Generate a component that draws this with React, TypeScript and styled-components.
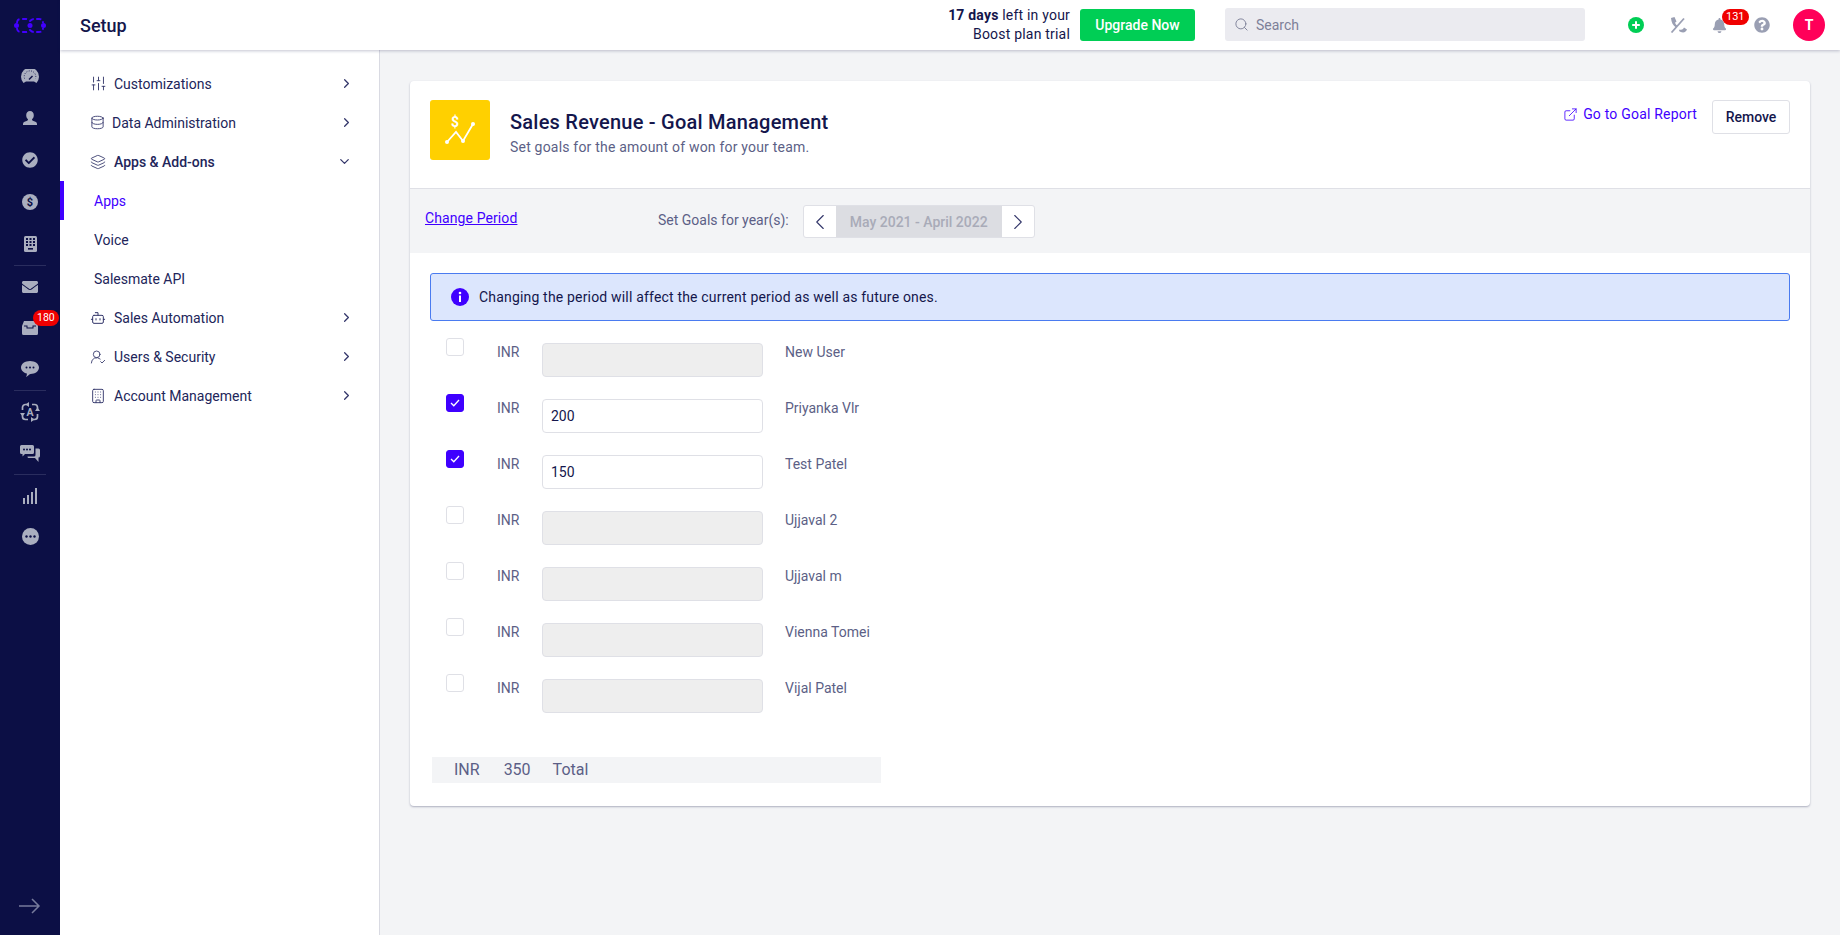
import React from "react";
import styled, { createGlobalStyle } from "styled-components";
import {
  SlidersVertical,
  Database,
  Layers,
  ChevronRight,
  ChevronDown,
  ChevronLeft,
  Bot,
  UserRoundCheck,
  Building,
  Search,
  ExternalLink,
} from "lucide-react";
import { FaCheckCircle, FaEnvelope, FaBell, FaQuestionCircle } from "react-icons/fa";

const GlobalStyle = createGlobalStyle`
  html, body { margin: 0; padding: 0; height: 100%; }
  body { font-family: Roboto, "Noto Sans", sans-serif; font-size: 14px; color: #14164c; background: #f3f4f6; }
  * { box-sizing: border-box; }
`;

const Page = styled.div`
  display: flex;
  height: 935px;
  overflow: hidden;
`;

const Rail = styled.nav`
  width: 60px;
  flex: none;
  background: #0c0f45;
  display: flex;
  flex-direction: column;
  align-items: center;
`;

const RailLogo = styled.div`
  height: 55px;
  width: 100%;
  flex: none;
  display: flex;
  align-items: center;
  justify-content: center;
  padding-bottom: 5px;
`;

const RailItem = styled.div<{ $h?: number }>`
  height: ${(p) => p.$h || 42}px;
  width: 100%;
  display: flex;
  align-items: center;
  justify-content: center;
  color: #aaaebf;
  position: relative;
  flex: none;
`;

const RailLine = styled.div`
  width: 32px;
  height: 1px;
  background: #2a2d5e;
  flex: none;
`;

const RailBadge = styled.span`
  position: absolute;
  top: 3px;
  left: 33px;
  background: #f00000;
  color: #fff;
  font-size: 10.5px;
  line-height: 16px;
  padding: 0 4px;
  border-radius: 8px;
`;

const RailArrow = styled.div`
  margin-top: auto;
  margin-bottom: 21px;
  color: #777b9c;
  display: flex;
`;

const Main = styled.div`
  flex: 1;
  display: flex;
  flex-direction: column;
  min-width: 0;
`;

const Header = styled.header`
  height: 50px;
  flex: none;
  background: #fff;
  box-shadow: 0 1px 3px rgba(20, 22, 76, 0.25);
  display: flex;
  align-items: center;
  padding-left: 20px;
  position: relative;
  z-index: 2;
`;

const PageName = styled.div`
  font-size: 18px;
  font-weight: 500;
  margin-right: auto;
`;

const Trial = styled.div`
  text-align: right;
  font-size: 14px;
  line-height: 19px;
  letter-spacing: 0.2px;
  margin-right: 10px;
  b { font-weight: 700; }
`;

const Upgrade = styled.button`
  width: 115px;
  height: 32px;
  border: none;
  border-radius: 3px;
  background: #00ce55;
  color: #fff;
  font-family: inherit;
  font-size: 14px;
  font-weight: 500;
  margin-right: 30px;
`;

const SearchBox = styled.div`
  width: 360px;
  height: 33px;
  background: #ebebf0;
  border-radius: 3px;
  display: flex;
  align-items: center;
  gap: 7px;
  padding-left: 9px;
  color: #7d8098;
  margin: 0 43px 1px 0;
`;

const HeaderIcons = styled.div`
  display: flex;
  align-items: center;
  padding-right: 15px;
`;

const HeaderIcon = styled.div<{ $w: number }>`
  width: ${(p) => p.$w}px;
  display: flex;
  color: #9a9fb3;
  position: relative;
`;

const BellBadge = styled.span`
  position: absolute;
  top: -9px;
  left: 10px;
  background: #f00000;
  color: #fff;
  font-size: 11px;
  line-height: 16px;
  padding: 0 4px;
  border-radius: 8px;
`;

const Avatar = styled.div`
  width: 32px;
  height: 32px;
  border-radius: 50%;
  background: #ff0059;
  color: #fff;
  font-weight: 700;
  font-size: 14px;
  display: flex;
  align-items: center;
  justify-content: center;
`;

const Body = styled.div`
  flex: 1;
  display: flex;
  min-height: 0;
`;

const Sidebar = styled.aside`
  width: 320px;
  flex: none;
  background: #fff;
  border-right: 1px solid #d9dae2;
  padding-top: 14px;
`;

const MenuRow = styled.div<{ $active?: boolean; $sub?: boolean; $bold?: boolean }>`
  height: 39px;
  display: flex;
  align-items: center;
  padding-left: ${(p) => (p.$sub ? 34 : 30)}px;
  padding-right: 25px;
  font-weight: ${(p) => (p.$bold ? 500 : 400)};
  color: ${(p) => (p.$active ? "#3f00ff" : "#22255a")};
  position: relative;
  ${(p) => p.$active && `&::before { content: ""; position: absolute; left: 0; top: 0; bottom: 0; width: 4px; background: #3f00ff; }`}
  svg { flex: none; color: #33366a; }
  > span { flex: 1; }
`;

const MenuIcon = styled.div<{ $w?: number }>`
  width: ${(p) => p.$w || 24}px;
  flex: none;
  display: flex;
`;

const OpenChevron = styled(ChevronDown)`
  margin-right: 2px;
`;

const Content = styled.main`
  flex: 1;
  padding: 31px 30px 0 30px;
  min-width: 0;
`;

const Card = styled.section`
  background: #fff;
  border-radius: 4px;
  box-shadow: 0 1px 2px rgba(40, 45, 90, 0.35);
`;

const CardHead = styled.div`
  height: 108px;
  display: flex;
  padding: 19px 20px 0 20px;
  border-bottom: 1px solid #dfe0e6;
`;

const GoalIcon = styled.div`
  width: 60px;
  height: 60px;
  background: #ffd000;
  border-radius: 3px;
  display: flex;
  margin-right: 20px;
  flex: none;
`;

const HeadText = styled.div`
  margin-right: auto;
  padding-top: 10px;
`;

const Title = styled.h1`
  margin: 0;
  font-size: 20px;
  line-height: 24px;
  font-weight: 500;
  letter-spacing: 0.23px;
`;

const SubTitle = styled.p`
  margin: 3px 0 0;
  font-size: 14px;
  line-height: 20px;
  letter-spacing: 0.2px;
  color: #5c5f86;
`;

const ReportLink = styled.a`
  display: flex;
  align-items: center;
  gap: 5px;
  height: 28px;
  margin: 0 15px 0 0;
  letter-spacing: 0.2px;
  color: #3f00ff;
`;

const RemoveBtn = styled.button`
  width: 78px;
  height: 34px;
  background: #fff;
  border: 1px solid #dfe0e6;
  border-radius: 3px;
  font-family: inherit;
  font-size: 14px;
  font-weight: 500;
  color: #14164c;
`;

const PeriodBar = styled.div`
  height: 64px;
  background: #f3f4f6;
  display: flex;
  align-items: flex-start;
  padding: 16px 0 0 15px;
`;

const ChangeLink = styled.a`
  color: #3f00ff;
  text-decoration: underline;
  letter-spacing: 0.1px;
  width: 233px;
  line-height: 26px;
`;

const PeriodLabel = styled.span`
  color: #5c5f86;
  line-height: 30px;
  margin-right: 14px;
`;

const Stepper = styled.div`
  display: flex;
  height: 33px;
  border: 1px solid #dfe0e6;
  border-radius: 3px;
  overflow: hidden;
  background: #fff;
`;

const StepBtn = styled.div`
  width: 32px;
  display: flex;
  align-items: center;
  justify-content: center;
  color: #33366a;
`;

const StepValue = styled.div`
  width: 166px;
  background: #dcdde2;
  color: #a9abb8;
  font-weight: 500;
  text-align: center;
  line-height: 33px;
`;

const CardBody = styled.div`
  padding: 20px 20px 23px;
`;

const Alert = styled.div`
  height: 48px;
  background: #dce6fd;
  border: 1px solid #4a7bf0;
  border-radius: 3px;
  display: flex;
  align-items: center;
  gap: 10px;
  padding-left: 20px;
  margin-bottom: 22px;
  letter-spacing: 0.18px;
`;

const GoalRow = styled.div`
  display: flex;
  height: 34px;
  margin: 0 0 22px 16px;
`;

const Check = styled.span<{ $on?: boolean }>`
  width: 18px;
  height: 18px;
  border-radius: 3px;
  margin-top: -5px;
  margin-right: 33px;
  flex: none;
  display: flex;
  align-items: center;
  justify-content: center;
  background: ${(p) => (p.$on ? "#3f00ff" : "#fff")};
  border: 1px solid ${(p) => (p.$on ? "#3f00ff" : "#dfe0e6")};
`;

const Currency = styled.span`
  width: 45px;
  flex: none;
  color: #5c5f86;
  line-height: 18px;
`;

const AmountInput = styled.div<{ $off?: boolean }>`
  width: 221px;
  height: 34px;
  flex: none;
  border: 1px solid #dfe0e6;
  border-radius: 4px;
  background: ${(p) => (p.$off ? "#eeeeee" : "#fff")};
  color: #14164c;
  padding-left: 8px;
  line-height: 32px;
  margin-right: 22px;
`;

const UserName = styled.span`
  color: #5c5f86;
  line-height: 18px;
`;

const TotalBar = styled.div`
  width: 449px;
  height: 26px;
  margin: 44px 0 0 2px;
  background: #f3f4f6;
  color: #5c5f86;
  font-size: 16px;
  line-height: 26px;
  display: flex;
  gap: 22px;
  padding-left: 22px;
  span:first-child { margin-right: 2px; }
`;

const menu = [
  { label: "Customizations", icon: <SlidersVertical size={17} strokeWidth={1.3} /> },
  { label: "Data Administration", icon: <Database size={15} strokeWidth={1.4} />, slot: 22 },
  { label: "Apps & Add-ons", icon: <Layers size={16} strokeWidth={1.3} />, open: true },
  { label: "Apps", sub: true, active: true },
  { label: "Voice", sub: true },
  { label: "Salesmate API", sub: true },
  { label: "Sales Automation", icon: <Bot size={16} strokeWidth={1.5} /> },
  { label: "Users & Security", icon: <UserRoundCheck size={16} strokeWidth={1.3} /> },
  { label: "Account Management", icon: <Building size={16} strokeWidth={1.4} /> },
];

const goals = [
  { name: "New User" },
  { name: "Priyanka Vlr", value: "200" },
  { name: "Test Patel", value: "150" },
  { name: "Ujjaval 2" },
  { name: "Ujjaval m" },
  { name: "Vienna Tomei" },
  { name: "Vijal Patel" },
];

const Logo = () => (
  <svg width="32" height="15" viewBox="0 0 32 15" fill="none" stroke="#4200ff" strokeWidth="1.8" strokeDasharray="5 2.5">
    <path d="M3 5Q3 1 7 1H12Q14 1 16 3Q18 1 20 1H25Q29 1 29 5" />
    <path d="M3 10Q3 14 7 14H12Q14 14 16 12Q18 14 20 14H25Q29 14 29 10" />
    <circle cx="2.5" cy="7.5" r="2.5" fill="#4200ff" stroke="none" />
    <circle cx="16" cy="7.5" r="2.5" fill="#4200ff" stroke="none" />
    <circle cx="29.5" cy="7.5" r="2.5" fill="#4200ff" stroke="none" />
  </svg>
);

const GaugeIcon = () => (
  <svg width="18" height="14" viewBox="0 0 18 14" fill="none">
    <path d="M2.5 14A9 9 0 1 1 15.5 14L13 12.5H5z" fill="currentColor" />
    <path d="M3.5 9.5A5.8 5.8 0 1 1 14.5 9.500" stroke="#0c0f45" strokeWidth="1" strokeDasharray="0.8 1.6" />
    <path d="M8 10.5L11.5 7" stroke="#0c0f45" strokeWidth="1.4" />
  </svg>
);

const UserIcon = () => (
  <svg width="14" height="14" viewBox="0 0 14 14">
    <path
      d="M7 0c2.400 0 3.800 1.800 3.800 4.200 0 1.800-.8 3.300-1.800 4 0 .8.400 1.300 1.500 1.700 1.800.6 3.500 1.200 3.500 3V14H0v-1.100c0-1.800 1.700-2.400 3.500-3C4.600 9.500 5 9 5 8.200c-1-.7-1.800-2.200-1.800-4C3.200 1.800 4.600 0 7 0z"
      fill="currentColor"
    />
  </svg>
);

const DollarIcon = () => (
  <svg width="16" height="16" viewBox="0 0 16 16">
    <circle cx="8" cy="8" r="8" fill="currentColor" />
    <text x="8" y="12" textAnchor="middle" fontSize="11" fontWeight="700" fill="#0c0f45" fontFamily="Roboto">$</text>
  </svg>
);

const KeypadIcon = () => (
  <svg width="13" height="16" viewBox="0 0 13 16">
    <rect width="13" height="16" rx="1.5" fill="currentColor" />
    {[2, 5.5, 9].map((x) =>
      [2, 5, 8].map((y) => <rect key={`${x}-${y}`} x={x} y={y} width="2" height="2" fill="#0c0f45" />)
    )}
    <rect x="4" y="12" width="5" height="1.6" fill="#0c0f45" />
  </svg>
);

const InboxIcon = () => (
  <svg width="16" height="14" viewBox="0 0 16 14">
    <path d="M2 0h12l2 5v7.500a1.500 1.500 0 0 1-1.500 1.500h-13A1.500 1.500 0 0 1 0 12.500V5z" fill="currentColor" />
    <path d="M2 4.500h3.500v2h5v-2H14v1H11.500v2h-7v-2H2z" fill="#0c0f45" />
  </svg>
);

const BubbleIcon = () => (
  <svg width="18" height="16" viewBox="0 0 18 16">
    <path d="M9 0c5 0 9 2.800 9 6.500S14 13 9.500 13c-1 .1-2 1.800-4.500 3 .7-1.200 1-2.400.9-3.400C2.500 11.800 0 9.500 0 6.500 0 2.800 4 0 9 0z" fill="currentColor" />
    <circle cx="5.500" cy="6.500" r="1" fill="#0c0f45" />
    <circle cx="9" cy="6.500" r="1" fill="#0c0f45" />
    <circle cx="12.500" cy="6.500" r="1" fill="#0c0f45" />
  </svg>
);

const AutomationIcon = () => (
  <svg width="20" height="20" viewBox="0 0 20 20" fill="none" stroke="currentColor" strokeWidth="1.700">
    <path d="M8 2.500H5.500a3 3 0 0 0-3 3V8M12 2.500h2.500a3 3 0 0 1 3 3V8M17.500 12v2.500a3 3 0 0 1-3 3H12M2.500 12v2.500a3 3 0 0 0 3 3H8" />
    <path d="M9 0L5.500 2.500 9 5zM15 9l2.500-3.500L20 9zM11 15l3.500 2.500L11 20zM0 11l2.500 3.500L5 11z" fill="currentColor" stroke="none" />
    <text x="10" y="14" textAnchor="middle" fontSize="10.500" fontWeight="700" fill="#aaaebf" stroke="none" fontFamily="Roboto">A</text>
  </svg>
);

const TwoChatsIcon = () => (
  <svg width="20" height="17" viewBox="0 0 20 17">
    <path d="M1.500 0h11A1.500 1.500 0 0 1 14 1.500v6A1.500 1.500 0 0 1 12.500 9H5l-2.500 2.500V9h-1A1.500 1.500 0 0 1 0 7.500v-6A1.500 1.500 0 0 1 1.500 0z" fill="currentColor" />
    <circle cx="4" cy="4.500" r="1" fill="#0c0f45" />
    <circle cx="7" cy="4.500" r="1" fill="#0c0f45" />
    <circle cx="10" cy="4.500" r="1" fill="#0c0f45" />
    <path d="M15.500 3.500h3A1.500 1.500 0 0 1 20 5v6a1.500 1.500 0 0 1-1.500 1.500V17L15 13H9c-1 0-1.500-.5-1.500-1.500h6.500a1.500 1.500 0 0 0 1.500-1.500z" fill="currentColor" />
  </svg>
);

const BarsIcon = () => (
  <svg width="14" height="16" viewBox="0 0 14 16" fill="currentColor">
    <rect x="0" y="10" width="2" height="6" />
    <rect x="4" y="7" width="2" height="9" />
    <rect x="8" y="4" width="2" height="12" />
    <rect x="12" y="0" width="2" height="16" />
  </svg>
);

const MoreIcon = () => (
  <svg width="17" height="17" viewBox="0 0 17 17">
    <circle cx="8.500" cy="8.500" r="8.500" fill="currentColor" />
    <circle cx="4.500" cy="8.500" r="1.200" fill="#0c0f45" />
    <circle cx="8.500" cy="8.500" r="1.200" fill="#0c0f45" />
    <circle cx="12.500" cy="8.500" r="1.200" fill="#0c0f45" />
  </svg>
);

const ArrowIcon = () => (
  <svg width="22" height="16" viewBox="0 0 22 16" fill="none" stroke="currentColor" strokeWidth="1.500">
    <path d="M0 8h20M13 1l7 7-7 7" />
  </svg>
);

const PlusIcon = () => (
  <svg width="16" height="16" viewBox="0 0 16 16">
    <circle cx="8" cy="8" r="8" fill="#00ce55" />
    <path d="M8 4.200v7.600M4.200 8h7.600" stroke="#fff" strokeWidth="2" />
  </svg>
);

const PhonePercentIcon = () => (
  <svg width="17" height="16" viewBox="0 0 17 16" fill="none">
    <path d="M1 1l3.500-1 2 4.500-1.500 1.200c.5 1.200 1.300 2.200 2.300 3L6 10.500C3 8.500 1.300 5.500 1 1z" fill="currentColor" />
    <path d="M9.500 12.500c1.500.5 2.500.3 3.500-.5l1-1.500 3 2c-.5 1.500-2 3-4 3-1.500 0-3-.8-4-1.500z" fill="currentColor" />
    <path d="M1.500 15.500L14 1.500" stroke="currentColor" strokeWidth="1.800" />
  </svg>
);

const GoalChart = () => (
  <svg width="60" height="60" viewBox="0 0 60 60" fill="none" stroke="#fff" strokeWidth="1.800">
    <path d="M17 42L26 32l7 9L43 24" />
    <circle cx="17" cy="42" r="2" fill="#fff" stroke="none" />
    <circle cx="33" cy="41" r="2" fill="#fff" stroke="none" />
    <circle cx="43" cy="24" r="2" fill="#fff" stroke="none" />
    <text x="25" y="27" textAnchor="middle" fontSize="14" fontWeight="700" fill="#fff" stroke="none" fontFamily="Roboto">$</text>
  </svg>
);

const InfoIcon = () => (
  <svg width="18" height="18" viewBox="0 0 18 18">
    <circle cx="9" cy="9" r="9" fill="#3f00ff" />
    <rect x="8" y="7.500" width="2" height="6.500" fill="#fff" />
    <circle cx="9" cy="5" r="1.300" fill="#fff" />
  </svg>
);

const TickIcon = () => (
  <svg width="10" height="8" viewBox="0 0 10 8" fill="none" stroke="#fff" strokeWidth="1.300">
    <path d="M1 4l2.800 2.800L9 1" />
  </svg>
);

export default function App() {
  return (
    <Page>
      <GlobalStyle />
      <Rail>
        <RailLogo><Logo /></RailLogo>
        <RailItem><GaugeIcon /></RailItem>
        <RailItem><UserIcon /></RailItem>
        <RailItem><FaCheckCircle size={16} /></RailItem>
        <RailItem><DollarIcon /></RailItem>
        <RailItem><KeypadIcon /></RailItem>
        <RailLine />
        <RailItem $h={41}><FaEnvelope size={16} /></RailItem>
        <RailItem $h={41}><InboxIcon /><RailBadge>180</RailBadge></RailItem>
        <RailItem><BubbleIcon /></RailItem>
        <RailLine />
        <RailItem><AutomationIcon /></RailItem>
        <RailItem $h={41}><TwoChatsIcon /></RailItem>
        <RailLine />
        <RailItem $h={41}><BarsIcon /></RailItem>
        <RailItem $h={41}><MoreIcon /></RailItem>
        <RailArrow><ArrowIcon /></RailArrow>
      </Rail>
      <Main>
        <Header>
          <PageName>Setup</PageName>
          <Trial><b>17 days</b> left in your<br />Boost plan trial</Trial>
          <Upgrade>Upgrade Now</Upgrade>
          <SearchBox><Search size={15} strokeWidth={1.5} /> Search</SearchBox>
          <HeaderIcons>
            <HeaderIcon $w={42}><PlusIcon /></HeaderIcon>
            <HeaderIcon $w={42}><PhonePercentIcon /></HeaderIcon>
            <HeaderIcon $w={42}><FaBell size={15} /><BellBadge>131</BellBadge></HeaderIcon>
            <HeaderIcon $w={39}><FaQuestionCircle size={16} /></HeaderIcon>
            <Avatar>T</Avatar>
          </HeaderIcons>
        </Header>
        <Body>
          <Sidebar>
            {menu.map((m) => (
              <MenuRow key={m.label} $sub={m.sub} $active={m.active} $bold={m.open}>
                {m.icon && <MenuIcon $w={m.slot}>{m.icon}</MenuIcon>}
                <span>{m.label}</span>
                {m.icon && (m.open ? <OpenChevron size={15} /> : <ChevronRight size={15} />)}
              </MenuRow>
            ))}
          </Sidebar>
          <Content>
            <Card>
              <CardHead>
                <GoalIcon><GoalChart /></GoalIcon>
                <HeadText>
                  <Title>Sales Revenue - Goal Management</Title>
                  <SubTitle>Set goals for the amount of won for your team.</SubTitle>
                </HeadText>
                <ReportLink><ExternalLink size={15} strokeWidth={1.3} /> Go to Goal Report</ReportLink>
                <RemoveBtn>Remove</RemoveBtn>
              </CardHead>
              <PeriodBar>
                <ChangeLink>Change Period</ChangeLink>
                <PeriodLabel>Set Goals for year(s):</PeriodLabel>
                <Stepper>
                  <StepBtn><ChevronLeft size={26} strokeWidth={1} /></StepBtn>
                  <StepValue>May 2021 - April 2022</StepValue>
                  <StepBtn><ChevronRight size={26} strokeWidth={1} /></StepBtn>
                </Stepper>
              </PeriodBar>
              <CardBody>
                <Alert><InfoIcon /> Changing the period will affect the current period as well as future ones.</Alert>
                {goals.map((g) => (
                  <GoalRow key={g.name}>
                    <Check $on={!!g.value}>{g.value && <TickIcon />}</Check>
                    <Currency>INR</Currency>
                    <AmountInput $off={!g.value}>{g.value}</AmountInput>
                    <UserName>{g.name}</UserName>
                  </GoalRow>
                ))}
                <TotalBar><span>INR</span><span>350</span><span>Total</span></TotalBar>
              </CardBody>
            </Card>
          </Content>
        </Body>
      </Main>
    </Page>
  );
}
